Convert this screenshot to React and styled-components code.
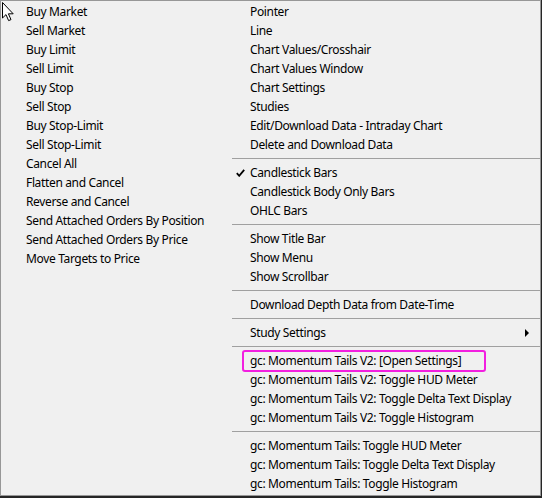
import styled, { createGlobalStyle } from "styled-components";

const GlobalStyle = createGlobalStyle`
    html, body {
        margin: 0;
        padding: 0;
        background: #262626;
    }
    body {
        font-family: "Noto Sans", "Liberation Sans", sans-serif;
        -webkit-font-smoothing: antialiased;
    }
`;

const orderItems = [
    "Buy Market",
    "Sell Market",
    "Buy Limit",
    "Sell Limit",
    "Buy Stop",
    "Sell Stop",
    "Buy Stop-Limit",
    "Sell Stop-Limit",
    "Cancel All",
    "Flatten and Cancel",
    "Reverse and Cancel",
    "Send Attached Orders By Position",
    "Send Attached Orders By Price",
    "Move Targets to Price",
];

// "-" marks a separator
const chartItems = [
    { label: "Pointer" },
    { label: "Line" },
    { label: "Chart Values/Crosshair" },
    { label: "Chart Values Window" },
    { label: "Chart Settings" },
    { label: "Studies" },
    { label: "Edit/Download Data - Intraday Chart" },
    { label: "Delete and Download Data" },
    "-",
    { label: "Candlestick Bars", checked: true },
    { label: "Candlestick Body Only Bars" },
    { label: "OHLC Bars" },
    "-",
    { label: "Show Title Bar" },
    { label: "Show Menu" },
    { label: "Show Scrollbar" },
    "-",
    { label: "Download Depth Data from Date-Time" },
    "-",
    { label: "Study Settings", submenu: true },
    "-",
    { label: "gc: Momentum Tails V2: [Open Settings]", marked: true },
    { label: "gc: Momentum Tails V2: Toggle HUD Meter" },
    { label: "gc: Momentum Tails V2: Toggle Delta Text Display" },
    { label: "gc: Momentum Tails V2: Toggle Histogram" },
    "-",
    { label: "gc: Momentum Tails: Toggle HUD Meter" },
    { label: "gc: Momentum Tails: Toggle Delta Text Display" },
    { label: "gc: Momentum Tails: Toggle Histogram" },
];

const CheckMark = () => (
    <svg width="9" height="8" viewBox="0 0 9 8">
        <path d="M0.8 4.2 L3.2 6.8 L8.2 0.8" fill="none" stroke="#000" strokeWidth="1.8" />
    </svg>
);

const SubArrow = () => (
    <svg width="4" height="8" viewBox="0 0 4 8">
        <path d="M0 0 L4 4 L0 8 Z" fill="#000" />
    </svg>
);

const Cursor = () => (
    <svg width="14" height="22" viewBox="0 0 14 22">
        <path
            d="M1.5 1.5 L1.5 17 L5 13.6 L7.6 19.6 L10 18.6 L7.4 12.8 L12.2 12.8 Z"
            fill="#fff"
            stroke="#000"
            strokeWidth="1"
            strokeLinejoin="round"
        />
    </svg>
);

export default function App() {
    return (
        <>
            <GlobalStyle />
            <Menu>
                <Column $width={231} $indent={25}>
                    {orderItems.map((label) => (
                        <Item key={label}>{label}</Item>
                    ))}
                </Column>
                <Column $width={308} $indent={18}>
                    {chartItems.map((item, i) =>
                        item === "-" ? (
                            <Separator key={i} />
                        ) : (
                            <Item key={i}>
                                {item.checked && (
                                    <Check>
                                        <CheckMark />
                                    </Check>
                                )}
                                <Label $marked={item.marked}>{item.label}</Label>
                                {item.submenu && (
                                    <Arrow>
                                        <SubArrow />
                                    </Arrow>
                                )}
                            </Item>
                        )
                    )}
                </Column>
                <Pointer>
                    <Cursor />
                </Pointer>
            </Menu>
        </>
    );
}

const Menu = styled.div`
    position: relative;
    display: flex;
    box-sizing: border-box;
    width: 541px;
    height: 496px;
    padding-top: 1px;
    border: 1px solid #979797;
    background: #f0f0f0;
    color: #000;
    font-size: 12px;
    letter-spacing: -0.35px;
`;

const Column = styled.div`
    display: flex;
    flex-direction: column;
    box-sizing: border-box;
    width: ${(p) => p.$width}px;
    padding-left: ${(p) => p.$indent}px;
    --indent: ${(p) => p.$indent}px;
`;

const Item = styled.div`
    position: relative;
    display: flex;
    align-items: center;
    height: 19px;
    white-space: nowrap;
`;

const Label = styled.span`
    position: relative;
    line-height: 19px;

    ${(p) =>
        p.$marked &&
        `
        &::after {
            content: "";
            position: absolute;
            left: -8px;
            right: -25px;
            top: -1px;
            bottom: -2px;
            border: 2px solid #f21fe0;
            border-radius: 3px;
        }
    `}
`;

const Check = styled.span`
    position: absolute;
    left: calc(4px - var(--indent));
    top: 6px;
    display: flex;
`;

const Arrow = styled.span`
    position: absolute;
    right: 11px;
    top: 6px;
    display: flex;
`;

const Separator = styled.div`
    height: 9px;
    margin-left: calc(0px - var(--indent));
    display: flex;
    align-items: center;

    &::before {
        content: "";
        flex: 1;
        height: 1px;
        background: #a0a0a0;
    }
`;

const Pointer = styled.div`
    position: absolute;
    left: 0;
    top: 0;
    pointer-events: none;
`;
